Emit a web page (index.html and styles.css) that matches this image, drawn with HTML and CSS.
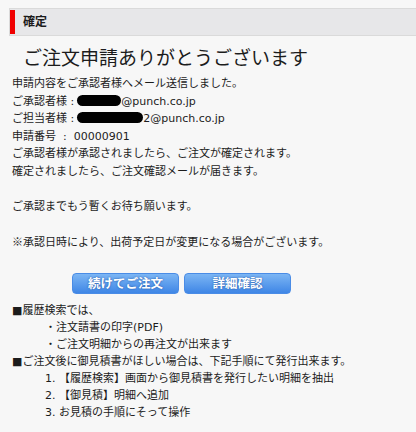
FILE: index.html
```html
<!DOCTYPE html>
<html lang="ja">
<head>
  <meta charset="UTF-8">
  <meta name="viewport" content="width=device-width, initial-scale=1.0">
  <title>確定</title>
  <link rel="stylesheet" href="styles.css">
</head>
<body>
  <div class="heading">
    <div class="heading-inner">確定</div>
  </div>

  <h1 class="title">ご注文申請ありがとうございます</h1>

  <div class="content">
    <p>申請内容をご承認者様へメール送信しました。</p>
    <p>ご承認者様 :<span class="masked masked-short"></span>@punch.co.jp</p>
    <p>ご担当者様 :<span class="masked masked-long"></span>2@punch.co.jp</p>
    <p>申請番号 &nbsp;: &nbsp;00000901</p>
    <p>ご承認者様が承認されましたら、ご注文が確定されます。</p>
    <p>確定されましたら、ご注文確認メールが届きます。</p>
    <p>&nbsp;</p>
    <p>ご承認までもう暫くお待ち願います。</p>
    <p>&nbsp;</p>
    <p><span class="cjk">※</span>承認日時により、出荷予定日が変更になる場合がございます。</p>

    <div class="buttons">
      <button class="blue-button">続けてご注文</button>
      <button class="blue-button">詳細確認</button>
    </div>

    <div class="notes">
      <p>■履歴検索では、</p>
      <p class="indent">・注文請書の印字(PDF)</p>
      <p class="indent">・ご注文明細からの再注文が出来ます</p>
      <p>■ご注文後に御見積書がほしい場合は、下記手順にて発行出来ます。</p>
      <p class="indent">1. 【履歴検索】画面から御見積書を発行したい明細を抽出</p>
      <p class="indent">2. 【御見積】明細へ追加</p>
      <p class="indent">3. お見積の手順にそって操作</p>
    </div>
  </div>
</body>
</html>
```

FILE: styles.css
```css
body {
  margin: 0;
  padding-top: 8px;
  background-color: #f7f7f7;
  color: #1c1c1c;
  font-family: "DejaVu Sans", "Noto Sans CJK JP", sans-serif;
}
p {
  margin: 0;
}
.cjk {
  font-family: "Noto Sans CJK JP", sans-serif;
}
.heading {
  margin-left: 9px;
  padding: 1px 0;
  border: 1px solid #dadada;
  border-right: none;
  background-color: #e7e7e9;
}
.heading-inner {
  height: 24px;
  line-height: 24px;
  padding-left: 8px;
  border-left: 5px solid #f00000;
  font-size: 12px;
  font-weight: bold;
}
.title {
  margin: 10px 0 0 23px;
  font-size: 19px;
  font-weight: normal;
  line-height: 24px;
}
.content {
  padding: 5px 0 0 12px;
  font-size: 11px;
  line-height: 17.5px;
}
.masked {
  display: inline-block;
  height: 11px;
  margin-left: 3px;
  vertical-align: -1px;
  background-color: #000;
  border-radius: 6px;
}
.masked-short {
  width: 44px;
}
.masked-long {
  width: 66px;
}
.buttons {
  display: flex;
  gap: 5px;
  margin: 22px 0 0 60px;
}
.blue-button {
  width: 107px;
  height: 21px;
  padding: 0;
  border: 1px solid #4a8ce6;
  border-radius: 4px;
  background: linear-gradient(#7cb6f4, #3f86e6);
  color: white;
  font-family: inherit;
  font-size: 12.5px;
  font-weight: bold;
  line-height: 19px;
  text-shadow: 0 0 2px #1e4f9c;
  cursor: pointer;
}
.notes {
  margin-top: 8px;
  line-height: 17px;
}
.indent {
  padding-left: 33px;
}
```
